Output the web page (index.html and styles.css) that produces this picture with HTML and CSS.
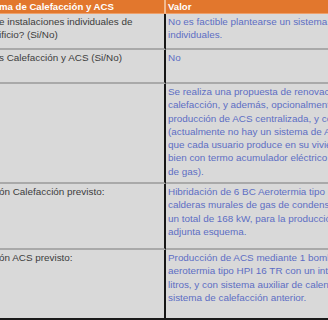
FILE: index.html
```html
<!DOCTYPE html>
<html lang="es">
<head>
<meta charset="utf-8">
<title>Sistema de Calefacción y ACS</title>
<link rel="stylesheet" href="styles.css">
</head>
<body>
<div class="sheet">
  <div class="cell head left"><span class="clip">ma de Calefacción y ACS</span></div>
  <div class="cell head right">Valor</div>

  <div class="cell left r1"><span class="clip">e instalaciones individuales de<br>ificio? (Si/No)</span></div>
  <div class="cell right r1">No es factible plantearse un sistema centralizado de<br>individuales.</div>

  <div class="cell left r2"><span class="clip">s Calefacción y ACS (Si/No)</span></div>
  <div class="cell right r2">No</div>

  <div class="cell left r3"></div>
  <div class="cell right r3">Se realiza una propuesta de renovación del sistema de<br>calefacción, y además, opcionalmente, se propone la<br>producción de ACS centralizada, y con ello<br>(actualmente no hay un sistema de ACS centralizado, ya<br>que cada usuario produce en su vivienda su ACS,<br>bien con termo acumulador eléctrico o con caldera<br>de gas).</div>

  <div class="cell left r4"><span class="clip">ón Calefacción previsto:</span></div>
  <div class="cell right r4">Hibridación de 6 BC Aerotermia tipo HPI con<br>calderas murales de gas de condensación, con<br>un total de 168 kW, para la producción de calefacción. Se<br>adjunta esquema.</div>

  <div class="cell left r5"><span class="clip">ón ACS previsto:</span></div>
  <div class="cell right r5">Producción de ACS mediante 1 bomba de calor de<br>aerotermia tipo HPI 16 TR con un interacumulador de<br>litros, y con sistema auxiliar de calentamiento con el<br>sistema de calefacción anterior.</div>
</div>
</body>
</html>
```

FILE: styles.css
```css
html, body {
  margin: 0;
  padding: 0;
  background: #ffffff;
}
body {
  width: 328px;
  height: 320px;
  overflow: hidden;
  font-family: "Liberation Sans", Arial, sans-serif;
}
.sheet {
  display: grid;
  grid-template-columns: 166px 162px;
  grid-template-rows: 14px 36px 34px 100px 66px 68px;
  background: #d9d9d9;
  border-bottom: 2px solid #1a1a1a;
  width: 328px;
}
.cell {
  font-size: 9.9px;
  line-height: 13.3px;
  white-space: nowrap;
  overflow: hidden;
  padding-top: 1px;
  box-sizing: border-box;
  border-bottom: 2px solid #a9a9a9;
}
.left {
  color: #3c3c3c;
  border-right: 2px solid #151515;
}
.right {
  color: #5d6ec4;
  padding-left: 2px;
}
.clip {
  display: block;
  margin-left: -1px;
}
.head {
  background: #e2772d;
  color: #ffffff;
  font-weight: bold;
  font-size: 9.6px;
  line-height: 12px;
  padding-top: 1px;
  border-bottom: 1px solid #eea06a;
}
.head.left {
  border-right: 2px solid #f2b98f;
}
.r5 {
  border-bottom: none;
}
```
